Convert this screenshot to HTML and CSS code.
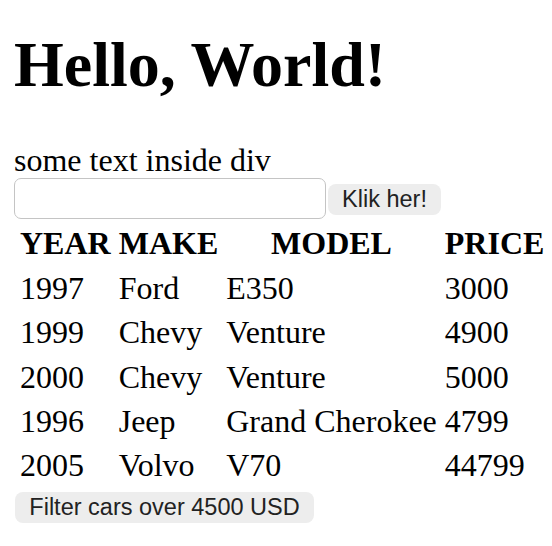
FILE: index.html
```html
<!DOCTYPE html>
<html>
<head>
<meta charset="utf-8">
<title>Hello</title>
<link rel="stylesheet" href="styles.css">
</head>
<body>
<h1 class="title">Hello, World!</h1>
<div class="intro">some text inside div</div>
<div class="form-row">
  <input class="text-input" type="text">
  <button class="btn btn-klik">Klik her!</button>
</div>
<table class="cars">
  <thead>
    <tr><th>YEAR</th><th>MAKE</th><th>MODEL</th><th>PRICE</th></tr>
  </thead>
  <tbody>
    <tr><td>1997</td><td>Ford</td><td>E350</td><td>3000</td></tr>
    <tr><td>1999</td><td>Chevy</td><td>Venture</td><td>4900</td></tr>
    <tr><td>2000</td><td>Chevy</td><td>Venture</td><td>5000</td></tr>
    <tr><td>1996</td><td>Jeep</td><td>Grand Cherokee</td><td>4799</td></tr>
    <tr><td>2005</td><td>Volvo</td><td>V70</td><td>44799</td></tr>
  </tbody>
</table>
<button class="btn btn-filter">Filter cars over 4500 USD</button>
</body>
</html>
```
FILE: styles.css
```css
html, body {
  background: #ffffff;
}
body {
  margin: 0 0 14px 14px;
  font-family: "Liberation Serif", "Times New Roman", serif;
  font-size: 32px;
  color: #000;
}
.title {
  font-size: 64px;
  font-weight: bold;
  line-height: 73.6px;
  margin: 28px 0 40px;
}
.intro {
  line-height: 36.8px;
}
.form-row {
  display: flex;
  align-items: center;
  gap: 2px;
}
.text-input {
  box-sizing: border-box;
  width: 312px;
  height: 41px;
  margin: 0;
  border: 1px solid #c4c4c4;
  border-radius: 7px;
  background: #fff;
  padding: 0 8px;
  outline: none;
}
.btn {
  box-sizing: border-box;
  font-family: "Liberation Sans", Arial, sans-serif;
  font-size: 23.5px;
  color: #222;
  background: #ededed;
  border: none;
  border-radius: 8px;
  margin: 0;
  padding: 0;
  height: 31px;
  white-space: nowrap;
}
.btn-klik {
  width: 113px;
  margin-top: 2px;
}
.btn-filter {
  display: block;
  width: 299px;
  margin: 2px 0 0 1px;
}
.cars {
  border-spacing: 4px;
}
.cars th, .cars td {
  padding: 2px;
  line-height: 36.4px;
  white-space: nowrap;
}
.cars th {
  text-align: center;
  font-weight: bold;
}
.cars tbody td {
  text-align: left;
}
```
